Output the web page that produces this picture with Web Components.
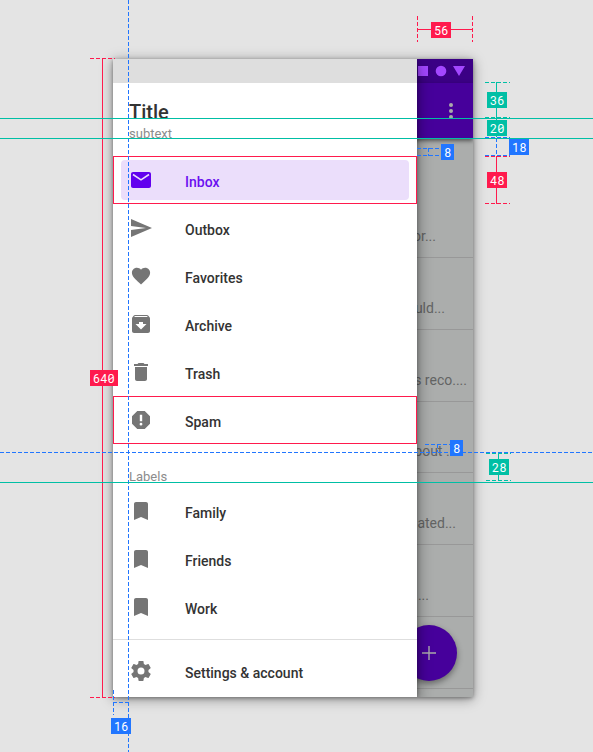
<!DOCTYPE html>
<html lang="en">
<head>
<meta charset="utf-8">
<meta name="viewport" content="width=device-width, initial-scale=1">
<title>Navigation drawer spec</title>
<style>
  html { background: #e4e4e4; }
  body { margin: 0; font-family: Roboto, "Liberation Sans", sans-serif; }
</style>
</head>
<body>
<spec-stage></spec-stage>
<script>
const RED = '#ff1a4d', BLUE = '#2176ff', GREEN = '#00bfa5';

class BaseElement extends HTMLElement {
  connectedCallback() {
    if (this.shadowRoot) return;
    this.attachShadow({ mode: 'open' }).innerHTML = this.render();
  }
}

const ICONS = {
  mail: '<path d="M20 4H4c-1.100 0-2 .9-2 2v12c0 1.100.9 2 2 2h16c1.100 0 2-.9 2-2V6c0-1.100-.9-2-2-2z"/><path d="M4 6.500L12 11.800 20 6.500" fill="none" stroke="#ebdefb" stroke-width="1.500"/>',
  send: '<path d="M2 21l21-9L2 3v7l15 2-15 2z"/>',
  heart: '<path transform="translate(1.100 1.100) scale(.91)" d="M12 21.350l-1.450-1.320C5.400 15.360 2 12.280 2 8.500 2 5.420 4.420 3 7.500 3c1.740 0 3.410.81 4.500 2.090C13.090 3.810 14.760 3 16.500 3 19.580 3 22 5.420 22 8.500c0 3.780-3.400 6.860-8.550 11.540z"/>',
  archive: '<path fill-rule="evenodd" d="M20.540 5.230l-1.390-1.680C18.880 3.210 18.470 3 18 3H6c-.47 0-.88.21-1.160.55L3.460 5.230C3.170 5.570 3 6.020 3 6.500V19c0 1.100.9 2 2 2h14c1.100 0 2-.9 2-2V6.500c0-.48-.17-.93-.46-1.270zM12 17.500L6.500 12H10v-2h4v2h3.500zM5.120 5l.81-1h12l.94 1z"/>',
  trash: '<path d="M6 19c0 1.100.9 2 2 2h8c1.100 0 2-.9 2-2V7H6zM19 4h-3.500l-1-1h-5l-1 1H5v2h14z"/>',
  report: '<path fill-rule="evenodd" d="M15.730 3H8.270L3 8.270v7.460L8.270 21h7.460L21 15.730V8.270zM12 17.600a1.400 1.400 0 1 1 0-2.800 1.400 1.400 0 0 1 0 2.800zM13.200 13.300h-2.400V6.800h2.400z"/>',
  bookmark: '<path d="M17 3H7c-1.100 0-2 .9-2 2v16l7-3 7 3V5c0-1.100-.9-2-2-2z"/>',
  gear: '<path fill-rule="evenodd" d="M19.430 12.980c.04-.32.07-.64.07-.98s-.03-.66-.07-.98l2.110-1.650c.19-.15.24-.42.12-.64l-2-3.460c-.12-.22-.39-.3-.61-.22l-2.490 1c-.52-.4-1.080-.73-1.690-.98l-.38-2.650C14.460 2.180 14.250 2 14 2h-4c-.25 0-.46.18-.49.42l-.38 2.650c-.61.25-1.170.59-1.690.98l-2.490-1c-.23-.09-.49 0-.61.22l-2 3.460c-.13.22-.07.49.12.64l2.110 1.650c-.04.32-.07.65-.07.98s.03.66.07.98l-2.110 1.650c-.19.15-.24.42-.12.64l2 3.460c.12.22.39.3.61.22l2.490-1c.52.4 1.080.73 1.690.98l.38 2.650c.03.24.24.42.49.42h4c.25 0 .46-.18.49-.42l.38-2.650c.61-.25 1.170-.59 1.690-.98l2.490 1c.23.09.49 0 .61-.22l2-3.460c.12-.22.07-.49-.12-.64zM12 15.500a3.500 3.500 0 1 1 0-7 3.500 3.500 0 0 1 0 7z"/>',
  more: '<circle cx="12" cy="6" r="2"/><circle cx="12" cy="12" r="2"/><circle cx="12" cy="18" r="2"/>',
  plus: '<path d="M19 12.700h-6.300V19h-1.400v-6.300H5v-1.400h6.300V5h1.400v6.300H19z"/>'
};

customElements.define('app-icon', class extends BaseElement {
  render() {
    return `<style>:host{display:block;width:24px;height:24px;flex:none}svg{display:block;fill:currentColor}</style>
      <svg width="24" height="24" viewBox="0 0 24 24" aria-hidden="true">${ICONS[this.getAttribute('name')]}</svg>`;
  }
});

customElements.define('drawer-item', class extends BaseElement {
  render() {
    return `<style>
      :host{display:block;height:48px;box-sizing:border-box;padding:4px 8px;color:#757575;--label:#333}
      :host([selected]){color:#6200ee;--label:#6a0ff0}
      :host([outlined]){outline:1px solid ${RED};outline-offset:-1px}
      a{display:flex;align-items:center;gap:32px;height:40px;padding:0 8px;border-radius:4px;color:inherit;text-decoration:none}
      :host([selected]) a{background:#ebdefb}
      span{color:var(--label);font-size:14px;line-height:20px;font-weight:500;padding-top:4px}
    </style><a href="#"><app-icon name="${this.getAttribute('icon')}"></app-icon><span><slot></slot></span></a>`;
  }
});

customElements.define('nav-drawer', class extends BaseElement {
  render() {
    return `<style>
      :host{display:block;background:#fff;box-shadow:0 6px 14px rgba(0,0,0,.45),0 0 4px rgba(0,0,0,.3)}
      .status{height:24px;background:#dedede}
      header{height:73px;box-sizing:border-box;padding:17px 16px 0}
      h1{margin:0;font-size:20px;line-height:24px;font-weight:500;color:#333}
      p{margin:0;font-size:13px;line-height:20px;color:#8c8c8c}
      h2{margin:0;height:43px;box-sizing:border-box;padding:23px 16px 0;font-size:13px;line-height:20px;font-weight:400;color:#8c8c8c}
      hr{margin:8px 0 7px;border:0;height:1px;background:#dedede}
      nav{padding-bottom:2px}
    </style>
    <div class="status"></div>
    <header><h1>Title</h1><p>subtext</p></header>
    <nav>
      <drawer-item icon="mail" selected outlined>Inbox</drawer-item>
      <drawer-item icon="send">Outbox</drawer-item>
      <drawer-item icon="heart">Favorites</drawer-item>
      <drawer-item icon="archive">Archive</drawer-item>
      <drawer-item icon="trash">Trash</drawer-item>
      <drawer-item icon="report" outlined>Spam</drawer-item>
      <h2>Labels</h2>
      <drawer-item icon="bookmark">Family</drawer-item>
      <drawer-item icon="bookmark">Friends</drawer-item>
      <drawer-item icon="bookmark">Work</drawer-item>
      <hr>
      <drawer-item icon="gear">Settings &amp; account</drawer-item>
    </nav>`;
  }
});

customElements.define('mail-app', class extends BaseElement {
  render() {
    const rows = [['or...', 37], ['uld...', 28], ['s reco....', 6], ['bout ...', 16], ['ated...', 17], ['...', 44]];
    return `<style>
      :host{display:flex;flex-direction:column;background:#abadac;position:relative;overflow:hidden}
      .status{height:24px;background:#3b0085;display:flex;justify-content:flex-end;align-items:center;padding-right:8px}
      .bar{height:56px;flex:none;background:#46009b;display:flex;justify-content:flex-end;align-items:center;padding-right:10px;box-shadow:0 2px 4px rgba(0,0,0,.5);z-index:1}
      button{border:0;padding:0;margin:0;background:none;color:#aaa;display:grid;place-items:center}
      ul{list-style:none;margin:0;padding:47px 0 8px;flex:1;display:grid;grid-auto-rows:1fr}
      li{border-bottom:1px solid #989898;display:flex;align-items:end;justify-content:flex-end;padding-bottom:11px;white-space:pre;font-size:14px;line-height:20px;color:#636464}
      .fab{position:absolute;right:16px;bottom:16px;width:56px;height:56px;border-radius:50%;background:#46009b;box-shadow:0 3px 6px rgba(0,0,0,.4)}
    </style>
    <div class="status"><svg width="48" height="12" viewBox="0 0 48 12" fill="#a347ff" aria-hidden="true"><path d="M1 1h10v10H1zM36 1h12l-6 10z"/><circle cx="24" cy="6" r="5.300"/></svg></div>
    <div class="bar"><button aria-label="More options"><app-icon name="more"></app-icon></button></div>
    <ul>${rows.map(([t, r]) => `<li style="padding-right:${r}px">${t}</li>`).join('')}<li></li></ul>
    <button class="fab" aria-label="Compose"><app-icon name="plus"></app-icon></button>`;
  }
});

customElements.define('phone-frame', class extends BaseElement {
  render() {
    return `<style>
      :host{display:block;isolation:isolate;box-shadow:0 2px 12px rgba(0,0,0,.4),0 1px 4px rgba(0,0,0,.35)}
      .screen{display:grid;grid-template-columns:1fr 56px;overflow:hidden}
      mail-app{grid-area:1/1/2/3}
      nav-drawer{grid-area:1/1;z-index:1}
    </style><div class="screen"><mail-app></mail-app><nav-drawer></nav-drawer></div>`;
  }
});

/* A 1px measuring line; its host style gives the start point and the length. */
customElements.define('spec-line', class extends BaseElement {
  render() {
    const v = this.hasAttribute('vertical'), c = this.getAttribute('color');
    const bg = this.hasAttribute('dashed')
      ? `repeating-linear-gradient(${v ? '180deg' : '90deg'},${c} 0 4px,transparent 4px 6px)` : c;
    return `<style>:host{position:absolute;${v ? 'width' : 'height'}:1px;background:${bg}}</style>`;
  }
});

customElements.define('spec-tag', class extends BaseElement {
  render() {
    return `<style>:host{position:absolute;box-sizing:border-box;height:16px;padding:0 3px;background:${this.getAttribute('color')};color:#fff;
      font:12px/16px "Roboto Mono","Liberation Mono",monospace;white-space:nowrap}</style><slot></slot>`;
  }
});

customElements.define('spec-stage', class extends BaseElement {
  render() {
    const h = (c, x, y, w, d = 'dashed') => `<spec-line ${d} color="${c}" style="left:${x};top:${y}px;width:${w}px"></spec-line>`;
    const v = (c, x, y, len, d = '') => `<spec-line vertical ${d} color="${c}" style="left:${x};top:${y}px;height:${len}px"></spec-line>`;
    const tag = (c, x, y, t) => `<spec-tag color="${c}" style="left:${x};top:${y}px">${t}</spec-tag>`;
    const guide = (c, y, d = '') => `<spec-line ${d} color="${c}" style="left:0;right:0;top:${y}px"></spec-line>`;
    const R = n => `calc(100% + ${n}px)`;
    return `<style>
      :host{display:grid;grid-template-columns:113fr 360fr 120fr;position:relative;min-height:100vh;box-sizing:border-box;padding:59px 0 55px;overflow:hidden;align-items:start}
      .device{grid-column:2;position:relative;z-index:1}
      phone-frame{position:relative;z-index:-2}
      .device{z-index:auto}
      :host{isolation:isolate}
      .full{top:-59px;bottom:-55px;left:15px}
      .tall{top:-1px;bottom:0;left:-11px}
      spec-tag{z-index:1}
    </style>
    <div class="device">
      <phone-frame></phone-frame>
      <spec-line vertical dashed class="full" color="${BLUE}"></spec-line>
      <spec-line vertical class="tall" color="${RED}"></spec-line>
      ${h(RED, '-23px', -1, 25)}${h(RED, '-23px', 638, 25)}${tag(RED, '-23px', 311, '640')}
      ${v(RED, R(-56), -43, 26, 'dashed')}${v(RED, R(-1), -43, 26, 'dashed')}${h(RED, R(-56), -30, 56, '')}${tag(RED, R(-42), -37, '56')}
      ${h(GREEN, R(12), 23, 25)}${v(GREEN, R(23), 23, 55)}${h(GREEN, R(12), 58, 25)}${tag(GREEN, R(14), 33, '36')}${tag(GREEN, R(14), 61, '20')}
      ${h(BLUE, R(12), 78, 25)}${v(BLUE, R(23), 79, 17, 'dashed')}${tag(BLUE, R(36), 80, '18')}
      ${h(BLUE, R(12), 96, 25)}${h(RED, R(12), 97, 25)}${v(RED, R(23), 97, 48)}${h(RED, R(12), 144, 25)}${tag(RED, R(14), 113, '48')}
      ${h(BLUE, R(-56), 89, 25)}${h(BLUE, R(-56), 96, 25)}${v(BLUE, R(-45), 89, 8, 'dashed')}${tag(BLUE, R(-32), 85, '8')}
      ${h(BLUE, R(-48), 385, 25)}${v(BLUE, R(-36), 385, 8, 'dashed')}${tag(BLUE, R(-23), 381, '8')}
      ${h(GREEN, R(13), 394, 25)}${h(GREEN, R(13), 421, 25)}${v(GREEN, R(25), 394, 28)}${tag(GREEN, R(16), 400, '28')}
      ${v(BLUE, '0px', 631, 25, 'dashed')}${h(BLUE, '0px', 643, 15)}${tag(BLUE, '-2px', 659, '16')}
    </div>
    ${guide(GREEN, 118)}${guide(GREEN, 138)}${guide(BLUE, 452, 'dashed')}${guide(GREEN, 482)}`;
  }
});
</script>
</body>
</html>
